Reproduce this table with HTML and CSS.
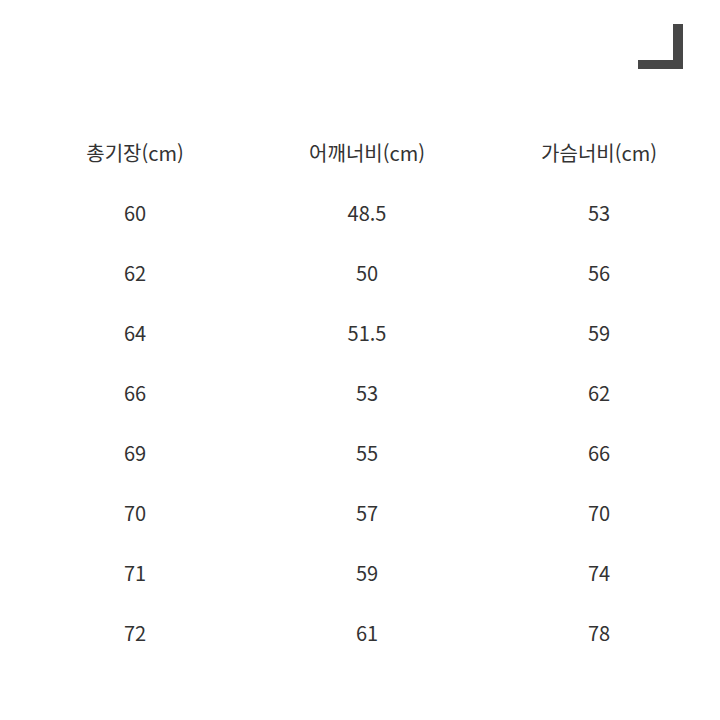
FILE: index.html
```html
<!DOCTYPE html>
<html lang="ko">
<head>
<meta charset="utf-8">
<link rel="stylesheet" href="styles.css">
</head>
<body>
<div class="page">
  <div class="top">
    <div class="corner"></div>
  </div>
  <div class="table">
    <div class="cell head">총기장(cm)</div>
    <div class="cell head">어깨너비(cm)</div>
    <div class="cell head">가슴너비(cm)</div>
    <div class="cell">60</div><div class="cell">48.5</div><div class="cell">53</div>
    <div class="cell">62</div><div class="cell">50</div><div class="cell">56</div>
    <div class="cell">64</div><div class="cell">51.5</div><div class="cell">59</div>
    <div class="cell">66</div><div class="cell">53</div><div class="cell">62</div>
    <div class="cell">69</div><div class="cell">55</div><div class="cell">66</div>
    <div class="cell">70</div><div class="cell">57</div><div class="cell">70</div>
    <div class="cell">71</div><div class="cell">59</div><div class="cell">74</div>
    <div class="cell">72</div><div class="cell">61</div><div class="cell">78</div>
  </div>
</div>
</body>
</html>
```

FILE: styles.css
```css
html, body {
  margin: 0;
  padding: 0;
  background: #ffffff;
}
.page {
  width: 720px;
  height: 720px;
  font-family: "Noto Sans CJK KR", "Noto Sans", sans-serif;
  color: #333333;
}
.top {
  display: flex;
  justify-content: flex-end;
  padding: 24px 37px 0 0;
  height: 123px;
  box-sizing: border-box;
}
.corner {
  width: 45px;
  height: 45px;
  box-sizing: border-box;
  border-right: 10px solid #474747;
  border-bottom: 9px solid #474747;
}
.table {
  display: grid;
  grid-template-columns: 232px 232px 232px;
  grid-auto-rows: 60px;
  padding-left: 19px;
}
.cell {
  display: flex;
  align-items: center;
  justify-content: center;
  font-size: 20px;
  line-height: 1;
}
```
